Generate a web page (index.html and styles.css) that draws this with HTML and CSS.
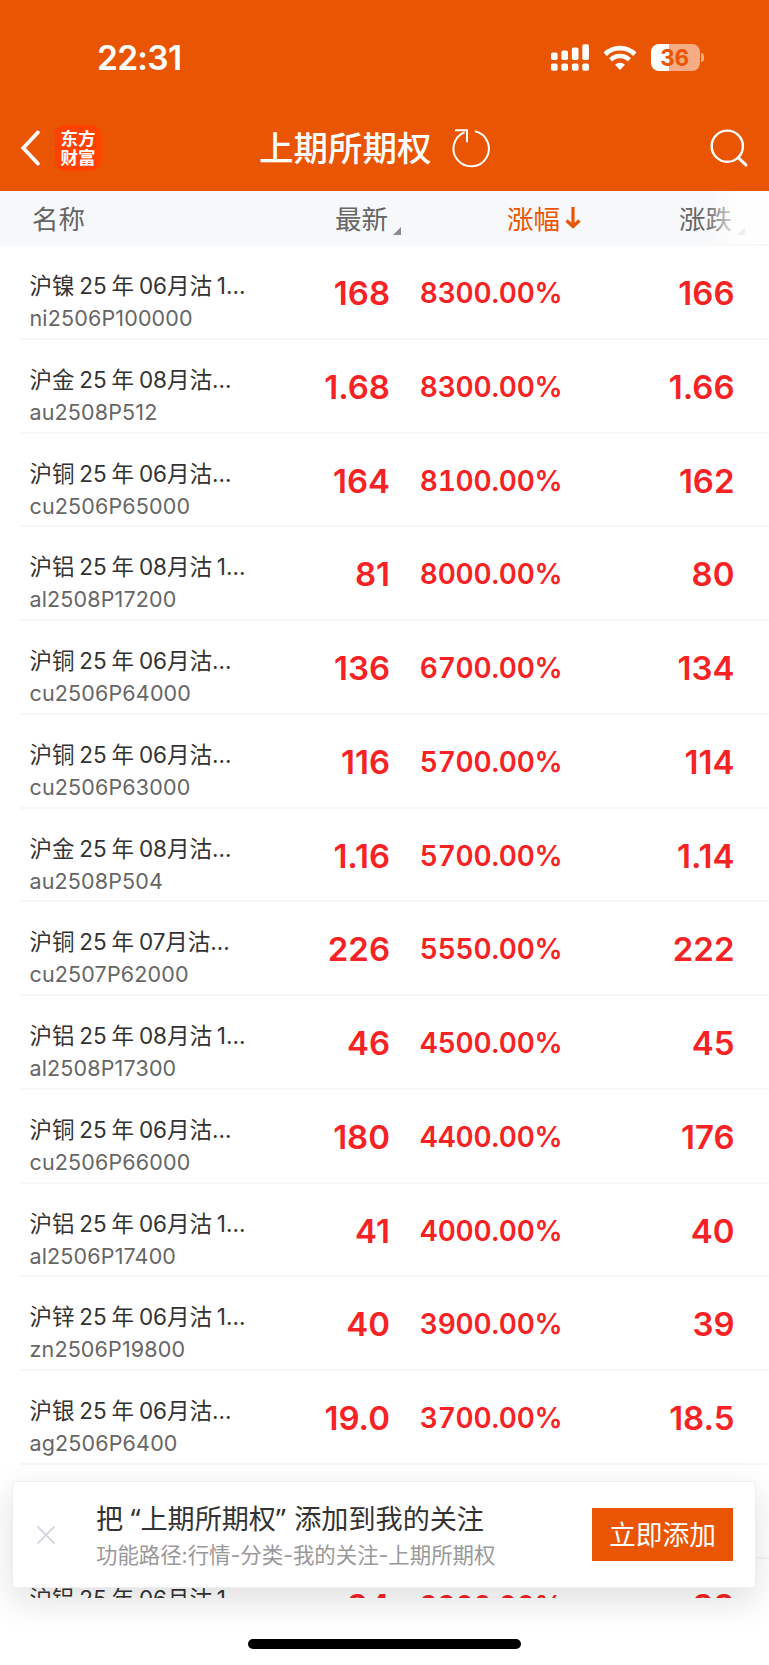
FILE: index.html
```html
<!DOCTYPE html>
<html lang="zh-CN">
<head>
    <meta charset="UTF-8">
    <meta name="viewport" content="width=device-width, initial-scale=1.0">
    <title>上期所期权</title>
    <link rel="stylesheet" href="styles.css">
</head>
<body>
    <div class="page">
        <header class="header">
            <div class="status-bar">
                <span class="time">22:31</span>
                <div class="status-icons">
                    <svg class="signal" width="38" height="28" viewBox="0 0 38 28" fill="#fff">
                        <rect x="0" y="8.5" width="6.6" height="7.6" rx="1.8"/>
                        <rect x="10.4" y="6.5" width="6.6" height="9.6" rx="1.8"/>
                        <rect x="20.9" y="3.5" width="6.6" height="12.6" rx="1.8"/>
                        <rect x="31.3" y="0.3" width="6.6" height="15.8" rx="1.8"/>
                        <rect x="0" y="19.5" width="6.6" height="7.2" rx="1.8"/>
                        <rect x="10.4" y="19.5" width="6.6" height="7.2" rx="1.8"/>
                        <rect x="20.9" y="19.5" width="6.6" height="7.2" rx="1.8"/>
                        <rect x="31.3" y="19.5" width="6.6" height="7.2" rx="1.8"/>
                    </svg>
                    <svg class="wifi" width="34" height="26" viewBox="0 0 34 26">
                        <path d="M2.2 9.2a21 21 0 0 1 29.6 0" fill="none" stroke="#fff" stroke-width="4.8"/>
                        <path d="M7.7 14.9a13.2 13.2 0 0 1 18.6 0" fill="none" stroke="#fff" stroke-width="4.4"/>
                        <path d="M17 25l-5-5.200a7.200 7.200 0 0 1 10 0z" fill="#fff"/>
                    </svg>
                    <div class="battery"><span>36</span></div>
                    <div class="battery-tip"></div>
                </div>
            </div>
            <div class="nav-bar">
                <svg class="back" width="20" height="36" viewBox="0 0 20 36" fill="none" stroke="#fff" stroke-width="3.8" stroke-linecap="round" stroke-linejoin="miter">
                    <path d="M17.800 2.500L3.300 18l14.500 15.500"/>
                </svg>
                <div class="logo">东方<br>财富</div>
                <h1>上期所期权</h1>
                <svg class="refresh" width="40" height="40" viewBox="0 0 40 40" fill="none" stroke="#fff" stroke-width="2">
                    <path d="M24 3.300A17.700 17.700 0 1 1 13.500 4.200"/>
                    <path d="M4 2.300h12v12"/>
                </svg>
                <svg class="search" width="38" height="38" viewBox="0 0 38 38" fill="none" stroke="#fff" stroke-width="2.400" stroke-linecap="round">
                    <circle cx="17.300" cy="17.200" r="15.600"/>
                    <path d="M28.300 28.600l7.500 7.300" stroke-width="3"/>
                </svg>
            </div>
        </header>

        <div class="table-head">
            <span>名称</span>
            <span class="col">最新<i class="corner"></i></span>
            <span class="col active">涨幅<svg class="arrow" width="16" height="22" viewBox="0 0 16 22" fill="none" stroke="#ea5504" stroke-width="3.2"><path d="M8 0v19.500M1.500 13.500L8 19.500l6.500-6"/></svg></span>
            <span class="col">涨跌<i class="corner"></i></span>
        </div>

        <main class="list">
            <div class="row">
                <div class="name"><p>沪镍 25 年 06月沽 1...</p><small>ni2506P100000</small></div>
                <b>168</b><b class="rate">8300.00%</b><b>166</b>
            </div>
            <div class="row">
                <div class="name"><p>沪金 25 年 08月沽...</p><small>au2508P512</small></div>
                <b>1.68</b><b class="rate">8300.00%</b><b>1.66</b>
            </div>
            <div class="row">
                <div class="name"><p>沪铜 25 年 06月沽...</p><small>cu2506P65000</small></div>
                <b>164</b><b class="rate">8100.00%</b><b>162</b>
            </div>
            <div class="row">
                <div class="name"><p>沪铝 25 年 08月沽 1...</p><small>al2508P17200</small></div>
                <b>81</b><b class="rate">8000.00%</b><b>80</b>
            </div>
            <div class="row">
                <div class="name"><p>沪铜 25 年 06月沽...</p><small>cu2506P64000</small></div>
                <b>136</b><b class="rate">6700.00%</b><b>134</b>
            </div>
            <div class="row">
                <div class="name"><p>沪铜 25 年 06月沽...</p><small>cu2506P63000</small></div>
                <b>116</b><b class="rate">5700.00%</b><b>114</b>
            </div>
            <div class="row">
                <div class="name"><p>沪金 25 年 08月沽...</p><small>au2508P504</small></div>
                <b>1.16</b><b class="rate">5700.00%</b><b>1.14</b>
            </div>
            <div class="row">
                <div class="name"><p>沪铜 25 年 07月沽...</p><small>cu2507P62000</small></div>
                <b>226</b><b class="rate">5550.00%</b><b>222</b>
            </div>
            <div class="row">
                <div class="name"><p>沪铝 25 年 08月沽 1...</p><small>al2508P17300</small></div>
                <b>46</b><b class="rate">4500.00%</b><b>45</b>
            </div>
            <div class="row">
                <div class="name"><p>沪铜 25 年 06月沽...</p><small>cu2506P66000</small></div>
                <b>180</b><b class="rate">4400.00%</b><b>176</b>
            </div>
            <div class="row">
                <div class="name"><p>沪铝 25 年 06月沽 1...</p><small>al2506P17400</small></div>
                <b>41</b><b class="rate">4000.00%</b><b>40</b>
            </div>
            <div class="row">
                <div class="name"><p>沪锌 25 年 06月沽 1...</p><small>zn2506P19800</small></div>
                <b>40</b><b class="rate">3900.00%</b><b>39</b>
            </div>
            <div class="row">
                <div class="name"><p>沪银 25 年 06月沽...</p><small>ag2506P6400</small></div>
                <b>19.0</b><b class="rate">3700.00%</b><b>18.5</b>
            </div>
            <div class="row"></div>
            <div class="row">
                <div class="name"><p>沪铝 25 年 06月沽 1...</p></div>
                <b>34</b><b class="rate">3300.00%</b><b>33</b>
            </div>
        </main>

        <div class="banner">
            <svg class="close" width="18" height="18" viewBox="0 0 18 18" stroke="#d5d7e0" stroke-width="1.800" stroke-linecap="round">
                <path d="M1 1l16 16M17 1L1 17"/>
            </svg>
            <div class="banner-text">
                <h2>把 <q>上期所期权</q> 添加到我的关注</h2>
                <p>功能路径:行情-分类-我的关注-上期所期权</p>
            </div>
            <button>立即添加</button>
        </div>
        <div class="home-indicator"></div>
    </div>
</body>
</html>
```
FILE: styles.css
```css
* {
    box-sizing: border-box;
    margin: 0;
    padding: 0;
}
body {
    font-family: Inter, "Noto Sans CJK SC", sans-serif;
    background-color: #fff;
    color: #333;
}
.page {
    position: relative;
    width: 769px;
    height: 1665px;
    overflow: hidden;
}
.header {
    height: 191px;
    background-color: #ea5504;
    color: #fff;
}
.status-bar {
    display: flex;
    align-items: center;
    justify-content: space-between;
    height: 106px;
    padding: 9px 65px 0 97px;
}
.time {
    padding-top: 1px;
    font-size: 33.5px;
    font-weight: 600;
    line-height: 40px;
    letter-spacing: -0.7px;
}
.status-icons {
    display: flex;
    align-items: center;
}
.wifi {
    margin: 0 14px;
}
.battery {
    width: 49px;
    height: 27px;
    border-radius: 8px;
    background: linear-gradient(to right, #fff 36%, #f5ab84 36%);
    color: #ea5504;
    font-size: 22.5px;
    font-weight: 700;
    line-height: 28px;
    letter-spacing: -0.3px;
    text-align: center;
}
.battery span {
    margin-right: 2px;
}
.battery-tip {
    width: 3px;
    height: 9px;
    margin-left: 1px;
    border-radius: 0 4px 4px 0;
    background-color: #f5ab84;
}
.nav-bar {
    display: flex;
    align-items: center;
    height: 84px;
    padding: 0 21px 0 20px;
}
.logo {
    width: 46px;
    height: 46px;
    margin-left: 15px;
    padding-top: 4px;
    border-radius: 9px;
    background-color: #ff4200;
    font-size: 17.5px;
    font-weight: 700;
    line-height: 19px;
    text-align: center;
}
.nav-bar h1 {
    margin-left: 158px;
    padding-top: 2px;
    font-size: 34.5px;
    font-weight: 500;
    line-height: 50px;
}
.refresh {
    margin-left: 19px;
}
.search {
    margin-left: auto;
}
.table-head {
    position: relative;
    display: grid;
    grid-template-columns: 205px 151px 172px 172px;
    height: 55px;
    padding-left: 32px;
    background-color: #f7f8fa;
    color: #666;
    font-size: 26.5px;
    line-height: 56px;
}
.table-head::after {
    content: "";
    position: absolute;
    top: 0;
    right: 0;
    width: 64px;
    height: 53px;
    background: linear-gradient(to right, rgba(255, 255, 255, 0), rgba(255, 255, 255, 0.85) 50%, #fff);
}
.col {
    position: relative;
    text-align: right;
}
.active {
    color: #ea5504;
}
.corner {
    position: absolute;
    left: 100%;
    top: 36px;
    margin-left: 5px;
    border-left: 8px solid transparent;
    border-bottom: 8px solid #8c8c8e;
}
.arrow {
    position: absolute;
    left: 100%;
    top: 16px;
    margin-left: 5px;
}
.list {
    height: 1351.500px;
    overflow: hidden;
}
.row {
    display: grid;
    grid-template-columns: 209.500px 151px 172.500px 172px;
    height: 93.750px;
    margin-left: 20px;
    padding-left: 9.500px;
    border-bottom: 2px solid #f7f7f7;
}
.name p {
    margin-top: 24px;
    font-size: 22.500px;
    line-height: 32px;
    word-spacing: -1.500px;
    white-space: nowrap;
}
.name small {
    display: block;
    margin-top: 3px;
    color: #666;
    font-size: 21.500px;
    line-height: 26px;
    letter-spacing: 0.15px;
}
.row b {
    color: #f62224;
    font-size: 33px;
    font-weight: 600;
    line-height: 95px;
    text-align: right;
}
.row .rate {
    font-size: 28px;
    font-variant-numeric: tabular-nums;
    letter-spacing: -0.2px;
}
.banner {
    position: absolute;
    left: 12px;
    top: 1481px;
    display: flex;
    align-items: center;
    width: 744px;
    height: 107px;
    padding: 0 22px 0 24px;
    border: 1px solid #eee;
    border-radius: 4px;
    background-color: #fff;
    box-shadow: 0 12px 36px rgba(0, 0, 0, 0.13);
}
.banner-text {
    flex: 1;
    margin-left: 41px;
    padding-top: 2px;
    white-space: nowrap;
}
.banner h2 {
    padding-top: 1px;
    font-size: 27.100px;
    font-weight: 400;
    line-height: 38px;
}
.banner q {
    quotes: "“" "”";
}
.banner q::before,
.banner q::after {
    font-family: "Noto Sans", sans-serif;
}
.banner q::after {
    margin-right: 1px;
}
.banner p {
    margin-top: -1px;
    color: #999;
    font-size: 21.400px;
    line-height: 34px;
}
.banner button {
    width: 141px;
    height: 53px;
    padding-top: 1px;
    border: none;
    background-color: #ea5504;
    color: #fff;
    font-family: inherit;
    font-size: 26.800px;
    line-height: 52px;
}
.home-indicator {
    position: absolute;
    left: 248px;
    top: 1639px;
    width: 273px;
    height: 10px;
    border-radius: 5px;
    background-color: #000;
}
```
